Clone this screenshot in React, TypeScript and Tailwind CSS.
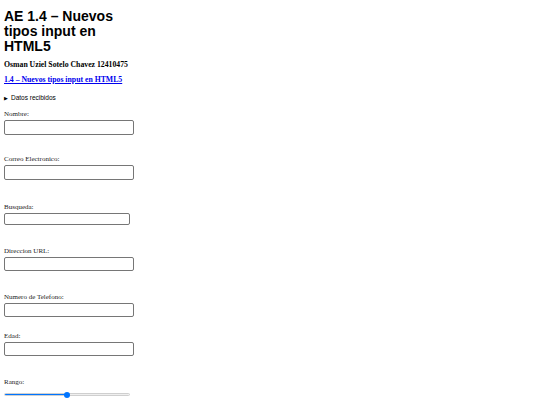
import React from 'react';

const serif = { fontFamily: '"Liberation Serif", "Times New Roman", serif' };

interface FieldProps {
  label: string;
  gap: string;
  short?: boolean;
}

// mt values are picked per field so labels land where the screenshot puts them
const fields: FieldProps[] = [
  { label: 'Nombre:', gap: 'mt-[8.5px]' },
  { label: 'Correo Electronico:', gap: 'mt-[20.5px]' },
  { label: 'Busqueda:', gap: 'mt-[23.5px]', short: true },
  { label: 'Direccion URL:', gap: 'mt-[21.5px]' },
  { label: 'Numero de Telefono:', gap: 'mt-[21.5px]' },
  { label: 'Edad:', gap: 'mt-[14.5px]' },
];

const Field: React.FC<FieldProps> = ({ label, gap, short }) => (
  <div className={`flex flex-col ${gap}`}>
    <label className="font-['Liberation_Serif',serif] text-[7px] leading-[8px] text-[#222]">{label}</label>
    <div
      className={
        short
          ? 'mt-[2px] h-[12px] w-[126px] rounded-[2px] border border-[#767676] bg-white'
          : 'mt-[2px] h-[14.5px] w-[130px] rounded-[2px] border border-[#767676] bg-white'
      }
    />
  </div>
);

const App: React.FC = () => {
  const rango = 50;

  return (
    <div className="min-h-[405px] w-full bg-white pl-[4px] text-black">
      <h1 className="w-[130px] pt-[8.5px] font-['Liberation_Sans',Arial,sans-serif] text-[14px] font-bold leading-[15px]">
        AE 1.4 – Nuevos tipos input en HTML5
      </h1>
      <p className="mt-[6px] text-[7.75px] font-bold leading-[10px]" style={serif}>
        Osman Uziel Sotelo Chavez 12410475
      </p>
      <a href="#" className="mt-[5.5px] block w-max text-[7.75px] font-bold leading-[10px] text-[#0000ee] underline" style={serif}>
        1.4 – Nuevos tipos input en HTML5
      </a>
      <div className="mt-[8.5px] flex items-center gap-[3px] font-['Liberation_Sans',Arial,sans-serif] text-[6.5px] leading-[8px]">
        <span className="text-[5px]">▶</span>
        <span>Datos recibidos</span>
      </div>

      {fields.map((f) => (
        <Field key={f.label} {...f} />
      ))}

      <div className="mt-[21.5px] flex flex-col">
        <label className="font-['Liberation_Serif',serif] text-[7px] leading-[8px] text-[#222]">Rango:</label>
        <div className="relative mt-[5px] flex h-[8px] w-[126px] items-center">
          <div className="flex h-[3.5px] w-full overflow-hidden rounded-full border border-[#cfcfcf] bg-[#efefef]">
            <div className="h-full bg-[#0075ff]" style={{ width: `${rango}%` }} />
          </div>
          <div
            className="absolute top-[1px] h-[6px] w-[6px] -translate-x-1/2 rounded-full bg-[#0075ff]"
            style={{ left: `${rango}%` }}
          />
        </div>
      </div>
    </div>
  );
};

export default App;
